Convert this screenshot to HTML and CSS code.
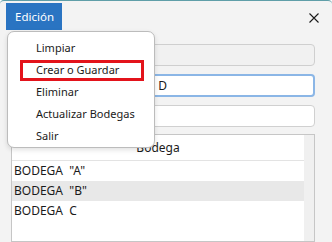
FILE: index.html
```html
<!DOCTYPE html>
<html lang="es">
<head>
    <meta charset="UTF-8">
    <title>Bodegas</title>
    <link rel="stylesheet" href="styles.css">
</head>
<body>

    <div class="window">
        <!-- Barra de titulo con menu -->
        <div class="titlebar">
            <div class="menu-title">Edición</div>
            <svg class="close" width="10" height="10" viewBox="0 0 10 10">
                <path d="M0.5 0.5 L9.5 9.5 M9.5 0.5 L0.5 9.5" stroke="#1a1a1a" stroke-width="1.1" fill="none"/>
            </svg>
        </div>

        <div class="content">
            <div class="field disabled"></div>
            <div class="field focused"><span class="field-text">BODEGA&nbsp;&nbsp; D</span></div>
            <div class="field"></div>

            <div class="grid">
                <div class="grid-body">
                    <div class="grid-header">Bodega</div>
                    <div class="grid-row">BODEGA&nbsp; "A"</div>
                    <div class="grid-row selected">BODEGA&nbsp; "B"</div>
                    <div class="grid-row">BODEGA&nbsp; C</div>
                </div>
                <div class="scrollbar"></div>
            </div>
        </div>

        <!-- Menu desplegable -->
        <ul class="dropdown">
            <li>Limpiar</li>
            <li class="marked">Crear o Guardar<span class="mark"></span></li>
            <li>Eliminar</li>
            <li>Actualizar Bodegas</li>
            <li>Salir</li>
        </ul>
    </div>

</body>
</html>
```

FILE: styles.css
```css
body {
    margin: 0;
    padding: 0;
    font-family: 'Noto Sans', sans-serif;
    font-size: 12px;
    color: #1a1a1a;
    background-color: #ffffff;
}
.window {
    position: relative;
    width: 332px;
    height: 242px;
    box-sizing: border-box;
    background-color: #f3f3f3;
    border-top: 1px solid #5f9ea8;
    border-radius: 4px 4px 0 0;
    overflow: hidden;
}
.titlebar {
    display: flex;
    justify-content: space-between;
    align-items: flex-start;
    height: 29px;
    padding: 2px 13px 0 6px;
    box-sizing: border-box;
}
.menu-title {
    background-color: #2a74c2;
    color: #ffffff;
    font-size: 11.5px;
    height: 27px;
    line-height: 27px;
    padding: 0 8px 0 9px;
}
.close {
    margin-top: 10px;
}
.content {
    display: flex;
    flex-direction: column;
    padding: 14px 17px 0 11px;
}
.field {
    height: 22px;
    box-sizing: border-box;
    background-color: #ffffff;
    border: 1px solid #d0d0d0;
    border-radius: 4px;
    margin-bottom: 8px;
}
.field.disabled {
    background-color: #f1f1f1;
    border-color: #cfcfcf;
}
.field.focused {
    height: 23px;
    border: 2px solid #8bb6e6;
    line-height: 19px;
    padding-left: 87px;
}
.grid {
    display: flex;
    height: 106px;
    margin-top: -1px;
    background-color: #ffffff;
    border: 1px solid #c6c6c6;
}
.grid-body {
    flex: 1;
}
.grid-header {
    height: 25px;
    line-height: 25px;
    text-align: center;
    border-bottom: 1px solid #e3e3e3;
}
.grid-row {
    height: 20px;
    line-height: 20px;
    padding-left: 2px;
}
.grid-row.selected {
    background-color: #e8e8e8;
}
.scrollbar {
    width: 10px;
    background-color: #f0f0f0;
}
.dropdown {
    position: absolute;
    left: 7px;
    top: 30px;
    width: 148px;
    height: 117px;
    box-sizing: border-box;
    margin: 0;
    padding: 5px 0 0 0;
    list-style-type: none;
    font-size: 11px;
    background-color: #ffffff;
    border: 1px solid #bcbcbc;
    border-radius: 7px;
    box-shadow: 0 2px 5px rgba(0, 0, 0, 0.12);
}
.dropdown li {
    position: relative;
    height: 22px;
    line-height: 22px;
    padding-left: 28px;
}
.mark {
    position: absolute;
    left: 12px;
    top: 1px;
    width: 124px;
    height: 21px;
    box-sizing: border-box;
    border: 3px solid #e3131b;
}
```
